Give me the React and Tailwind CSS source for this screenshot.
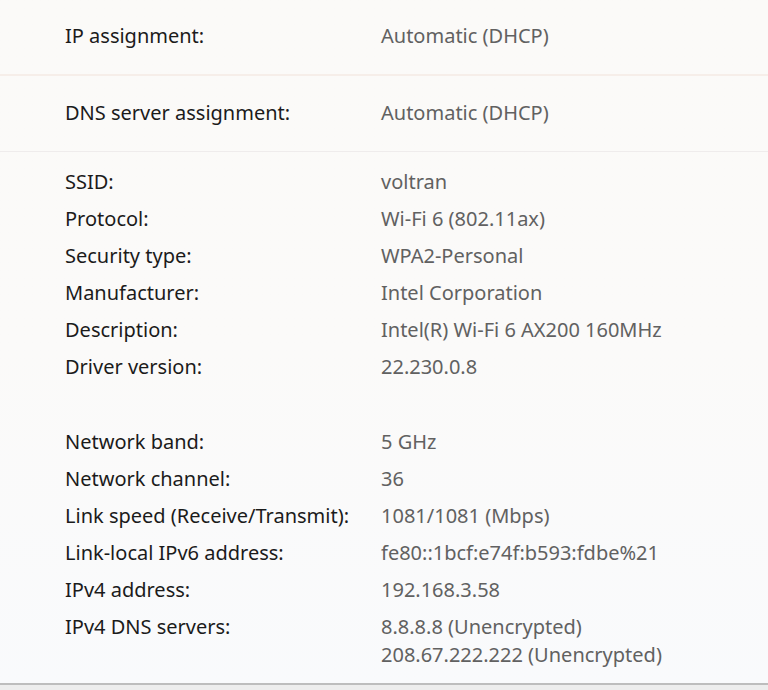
import React from "react";

const details = [
    ["SSID:", ["voltran"]],
    ["Protocol:", ["Wi-Fi 6 (802.11ax)"]],
    ["Security type:", ["WPA2-Personal"]],
    ["Manufacturer:", ["Intel Corporation"]],
    ["Description:", ["Intel(R) Wi-Fi 6 AX200 160MHz"]],
    ["Driver version:", ["22.230.0.8"]],
    ["", [""]],
    ["Network band:", ["5 GHz"]],
    ["Network channel:", ["36"]],
    ["Link speed (Receive/Transmit):", ["1081/1081 (Mbps)"]],
    ["Link-local IPv6 address:", ["fe80::1bcf:e74f:b593:fdbe%21"]],
    ["IPv4 address:", ["192.168.3.58"]],
    ["IPv4 DNS servers:", ["8.8.8.8 (Unencrypted)", "208.67.222.222 (Unencrypted)"]],
];

const TopRow = ({ label, value, border }) => (
    <div className={"grid grid-cols-[316px_1fr] items-center h-[76px] pl-[65px] pb-[2px] " + border}>
        <span className="text-[#1b1b1b]">{label}</span>
        <span className="text-[#616161]">{value}</span>
    </div>
);

const App = () => {
    return (
        <div
            className="w-[768px] h-[690px] overflow-hidden flex flex-col bg-gradient-to-b from-[#fbfaf8] via-[#fbfaf9] to-[#f9fafc] text-[20px] leading-[28px]"
            style={{ fontFamily: '"Noto Sans", "Open Sans", sans-serif' }}
        >
            <TopRow label="IP assignment:" value="Automatic (DHCP)" border="border-b-2 border-[#f6eee9]" />
            <TopRow label="DNS server assignment:" value="Automatic (DHCP)" border="border-b border-[#efecec]" />

            <div className="flex-1 pl-[65px] pt-[16px] flex flex-col gap-[9px]">
                {details.map(([label, values], i) => (
                    <div key={i} className={"grid grid-cols-[316px_1fr] " + (label ? "min-h-[28px]" : "min-h-[29px]")}>
                        <span className="text-[#1b1b1b]">{label}</span>
                        <div className="flex flex-col text-[#616161]">
                            {values.map((v, j) => (
                                <span key={j}>{v}</span>
                            ))}
                        </div>
                    </div>
                ))}
            </div>

            <div className="h-[7px] border-t-2 border-[#bdbdbd] bg-[#ededed]" />
        </div>
    );
};

export default App;
